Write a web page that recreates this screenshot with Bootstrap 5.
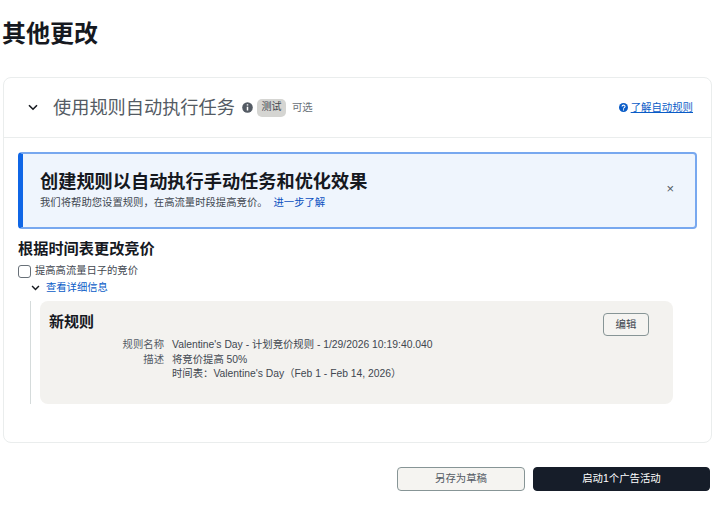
<!DOCTYPE html>
<html lang="zh-CN"><head><meta charset="utf-8">
<link href="https://cdn.jsdelivr.net/npm/bootstrap@5.3.0/dist/css/bootstrap.min.css" rel="stylesheet">
<style>
html,body{height:509px;overflow:hidden}
body{font-family:"Liberation Sans","Noto Sans CJK SC",sans-serif;color:#16191f;background:#fff;padding:0 8px 0 3px;font-size:11px}
.pg-title{font-size:24px;font-weight:700;line-height:32px;margin:18px 0 27px -1px;color:#16191f}
.main-card{border:1px solid #eaeded;border-radius:8px;height:366px}
.hdr{height:60px;border-bottom:1px solid #eaeded;padding:0 18px 0 24px}
.hdr-title{font-size:18.2px;color:#545b64;margin-left:15px;margin-right:7px;line-height:24px}
.beta{background:#d5d5d2;border-radius:5px;font-size:10px;color:#414750;height:18px;line-height:16px;padding:0 4.5px;margin:1px 6px 0 4px}
.opt{color:#687078;font-size:10.4px}
.learn{color:#0a5cc7;font-size:10.4px;text-decoration:underline;margin-left:3px}
.info-box{margin:14px 14px 0 14px;height:77px;border:2px solid #78a8ef;border-left:5px solid #0f66e6;border-radius:4px;background:#eff5fd;padding:0 21px 0 17px}
.info-h{font-size:18.2px;font-weight:700;line-height:24px;color:#16191f;margin-top:-2px}
.info-s{font-size:10.35px;line-height:14px;color:#414750;margin-top:2px}
.info-s a{color:#0a4fc0;text-decoration:none;margin-left:3px}
.x{color:#545b64;font-size:13px;line-height:1;margin-top:-4px}
.sec{padding:0 14px}
.sec-h{font-size:15.2px;font-weight:700;line-height:20px;margin-top:10px}
.ck{width:13px;height:13px;border:1px solid #687078;border-radius:3px;background:#fff;margin:0 4px 0 0;display:block}
.ck-l{font-size:10.3px;color:#414750;line-height:14px}
.det{font-size:10.3px;color:#0a5cc7;line-height:14px;margin:3px 0 0 13px}
.det svg{margin-right:6px}
.rail{margin:6px 0 0 12px;border-left:1px solid #d5dbdb;padding-left:9px;height:103px}
.rule{background:#f3f2ef;border-radius:8px;height:103px;width:633px;padding:11px 24px 0 9px}
.rule-h{font-size:15px;font-weight:700;line-height:20px}
.rw{font-size:10.35px;line-height:14.6px;color:#414750}
.rl{width:123px;text-align:right;color:#545b64;padding-right:8px;flex:none}
.ed{border:1px solid #879596;border-radius:4px;background:#f5f4f1;font-size:10.4px;color:#414750;width:46px;height:23px;padding:0;margin-top:1px}
.foot{margin:24px 2px 0 0;gap:8px}
.b1,.b2{height:24px;border-radius:4px;font-size:10.4px;padding:0}
.b1{width:128px;background:#f5f4f1;border:1px solid #879596;color:#545b64}
.b2{width:177px;background:#161d29;border:1px solid #161d29;color:#fff}
</style></head><body>
<h1 class="pg-title">其他更改</h1>
<div class="main-card bg-white">
  <div class="hdr d-flex align-items-center">
    <svg width="10" height="7" viewBox="0 0 10 7"><path d="M1 1.2 5 5.2 9 1.2" fill="none" stroke="#16191f" stroke-width="1.6"/></svg>
    <span class="hdr-title">使用规则自动执行任务</span>
    <svg width="11" height="11" viewBox="0 0 11 11"><circle cx="5.5" cy="5.5" r="5.3" fill="#545b64"/><path d="M5.5 2.2v1.4M5.5 4.8v3.8" stroke="#fff" stroke-width="1.5"/></svg>
    <span class="beta">测试</span><span class="opt">可选</span>
    <span class="ms-auto d-flex align-items-center">
      <svg width="9" height="9" viewBox="0 0 10 10"><circle cx="5" cy="5" r="5" fill="#0a5cc7"/><path d="M3.4 3.9c0-2.1 3.3-2.1 3.3 0 0 1.2-1.7 1.2-1.7 2.4M5 7v1.2" fill="none" stroke="#fff" stroke-width="1.2"/></svg>
      <a class="learn" href="#">了解自动规则</a>
    </span>
  </div>
  <div class="info-box d-flex align-items-center">
    <div class="flex-grow-1">
      <div class="info-h">创建规则以自动执行手动任务和优化效果</div>
      <div class="info-s">我们将帮助您设置规则，在高流量时段提高竞价。 <a href="#">进一步了解</a></div>
    </div>
    <span class="x">×</span>
  </div>
  <div class="sec">
    <div class="sec-h">根据时间表更改竞价</div>
    <div class="d-flex align-items-center" style="margin-top:5px"><span class="ck"></span><span class="ck-l">提高高流量日子的竞价</span></div>
    <div class="det d-flex align-items-center">
      <svg width="9" height="6" viewBox="0 0 10 7"><path d="M1 1.2 5 5.2 9 1.2" fill="none" stroke="#16191f" stroke-width="1.7"/></svg>
      <a class="text-decoration-none" style="color:#0a5cc7" href="#">查看详细信息</a>
    </div>
    <div class="rail">
      <div class="rule d-flex justify-content-between align-items-start">
        <div>
          <div class="rule-h">新规则</div>
          <div class="rw d-flex" style="margin-top:6px"><span class="rl">规则名称</span><span>Valentine's Day - 计划竞价规则 - 1/29/2026 10:19:40.040</span></div>
          <div class="rw d-flex"><span class="rl">描述</span><span>将竞价提高 50%</span></div>
          <div class="rw d-flex"><span class="rl"></span><span>时间表：Valentine's Day（Feb 1 - Feb 14, 2026）</span></div>
        </div>
        <button class="ed" type="button">编辑</button>
      </div>
    </div>
  </div>
</div>
<div class="foot d-flex justify-content-end">
  <button class="b1" type="button">另存为草稿</button>
  <button class="b2" type="button">启动1个广告活动</button>
</div>
<script src="https://cdn.jsdelivr.net/npm/bootstrap@5.3.0/dist/js/bootstrap.bundle.min.js"></script>
</body></html>
